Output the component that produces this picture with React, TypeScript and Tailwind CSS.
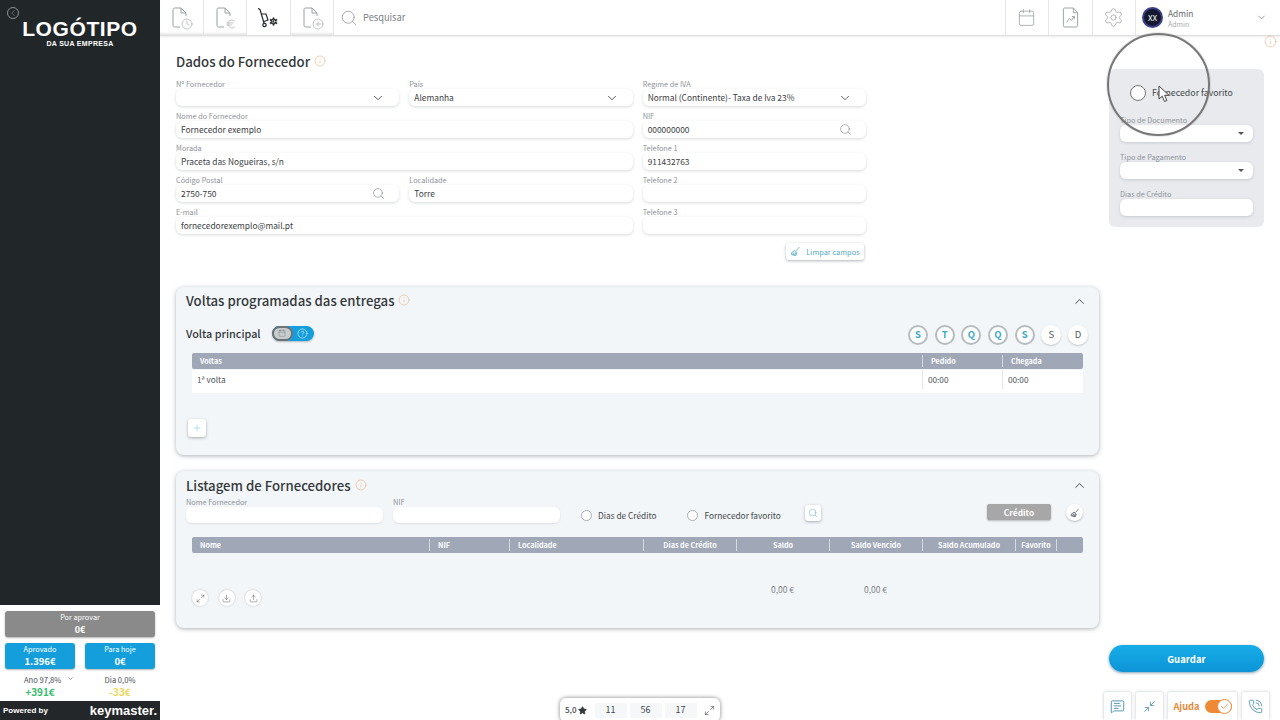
import React from 'react';
import { ChevronDown, ChevronUp, Search, Settings, Calendar, Info, Star, Maximize2, Minimize2, Download, Upload, Plus, HelpCircle, MessageSquareText, PhoneCall, Check, ChevronLeft, Clock, Euro, CirclePlus } from 'lucide-react';

const font = 'font-["Noto_Sans_CJK_SC","Noto_Sans",sans-serif]';

function Broom({ className }: { className?: string }) {
  return (
    <svg viewBox="0 0 16 16" className={className} fill="none" stroke="currentColor" strokeWidth="1.1">
      <path d="M13.5 1.5 9 7" />
      <path d="M6.5 6.5 10 9.5 8.5 14 2 12.5 1.5 10.5Z" fill="currentColor" fillOpacity="0.25" />
      <path d="M4 12.8 6 10M6.5 13.5 8 10.5" />
    </svg>
  );
}

function DocIcon({ badge: Badge }: { badge: React.ComponentType<{ className?: string; strokeWidth?: number }> }) {
  return (
    <div className="relative w-[20px] h-[22px] text-[#9aa0a3]">
      <svg viewBox="0 0 20 22" className="w-[20px] h-[22px]" fill="none" stroke="currentColor" strokeWidth="1">
        <path d="M9 20H3.5a1.5 1.5 0 0 1-1.500-1.500V2.500A1.500 1.500 0 0 1 3.500 1H10l5 5v3" />
        <path d="M10 1v5h5" />
      </svg>
      <div className="absolute right-[-2px] bottom-[-1px] bg-white rounded-full">
        <Badge className="w-[12px] h-[12px]" strokeWidth={1.2} />
      </div>
    </div>
  );
}

function Trolley() {
  return (
    <div className="relative w-[22px] h-[22px] text-[#24292c] -ml-[3px]">
      <svg viewBox="0 0 22 22" className="w-[22px] h-[22px]" fill="none" stroke="currentColor" strokeWidth="1.2">
        <path d="M2 1.500 4 2.500 8 16" />
        <path d="M5 7h5l2 6-5 2" />
        <circle cx="8.500" cy="18" r="1.700" />
      </svg>
      <Settings className="absolute right-[-1px] bottom-[2px] w-[11px] h-[11px] fill-[#24292c] text-white" strokeWidth={1.4} />
    </div>
  );
}

function Tab({ children, active }: { children: React.ReactNode; active?: boolean }) {
  return (
    <div className={`w-[43.500px] h-full flex items-center justify-center border-r border-[#e4e6e8] ${active ? 'bg-white relative z-10 h-[38px]' : 'shadow-[inset_0_-3px_3px_-2px_#d9dbdd]'}`}>
      {children}
    </div>
  );
}

function Field({ label, value, icon, className }: { label: string; value?: string; icon?: 'chevron' | 'search' | 'caret'; className?: string }) {
  return (
    <div className={className}>
      <div className="text-[7.300px] leading-[10px] text-[#8d9296] h-[10px] truncate">{label}</div>
      <div className="h-[17px] bg-white rounded-[6px] shadow-[0_1px_3px_rgba(120,130,140,0.3)] flex items-center justify-between pl-[5px] pr-[14px] text-[8.400px] text-[#3c4144]">
        <span>{value}</span>
        {icon === 'chevron' && <ChevronDown className="w-[14px] h-[14px] text-[#33383b]" strokeWidth={1.4} />}
        {icon === 'search' && <Search className="w-[13px] h-[13px] text-[#7d8387]" strokeWidth={1.1} />}
        {icon === 'caret' && <span className="w-0 h-0 border-x-[3px] border-x-transparent border-t-[3px] border-t-[#555] -mr-[5px]" />}
      </div>
    </div>
  );
}

function SectionTitle({ text, className }: { text: string; className?: string }) {
  return (
    <div className={`flex items-start gap-[4px] ${className ?? ''}`}>
      <span className="text-[13.200px] leading-[18px] font-medium text-[#33383b]">{text}</span>
      <Info className="w-[12px] h-[12px] text-[#e5b27c] mt-[2px]" strokeWidth={1.2} />
    </div>
  );
}

function Radio({ label, className }: { label: string; className?: string }) {
  return (
    <div className={`flex items-center gap-[6px] text-[8.300px] text-[#44494c] ${className ?? ''}`}>
      <span className="w-[11px] h-[11px] rounded-full bg-white border border-[#a9aeb2]" />
      {label}
    </div>
  );
}

const dias = [
  { d: 'S', on: true }, { d: 'T', on: true }, { d: 'Q', on: true }, { d: 'Q', on: true }, { d: 'S', on: true },
  { d: 'S', on: false }, { d: 'D', on: false },
];

const colunas = ['Nome', 'NIF', 'Localidade', 'Dias de Crédito', 'Saldo', 'Saldo Vencido', 'Saldo Acumulado', 'Favorito', ''];
const gridListagem = 'grid grid-cols-[237px_80px_134px_93px_93px_93px_93px_41px_27px]';

export default function App() {
  return (
    <div className={`relative w-[1280px] h-[720px] overflow-hidden flex bg-white ${font}`}>
      <aside className="w-[160px] h-full flex flex-col shrink-0">
        <div className="flex-1 bg-[#212629] relative pt-[18px] text-white">
          <ChevronLeft className="absolute left-[8px] top-[8px] w-[10px] h-[10px] rounded-full outline outline-1 outline-[#8b9194] text-[#8b9194]" strokeWidth={1.5} />
          <div className="text-center font-['Liberation_Sans',sans-serif] font-bold text-[21px] leading-[21px] tracking-[0.6px]">LOGÓTIPO</div>
          <div className="text-center font-['Liberation_Sans',sans-serif] font-bold text-[7px] leading-[7px] tracking-[0.3px] mt-[1px]">DA SUA EMPRESA</div>
        </div>
        <div className="h-[96px] bg-white px-[5px] pt-[6px] shrink-0 text-white text-center">
          <div className="h-[26px] bg-[#8a8a8a] rounded-[3px] shadow-[0_1px_2px_rgba(0,0,0,0.3)] text-[7.300px] leading-[12px]">
            Por aprovar
            <div className="text-[9px] font-bold leading-[13px]">0€</div>
          </div>
          <div className="flex justify-between mt-[6px]">
            <div className="w-[70px] h-[26px] bg-[#149fdc] rounded-[3px] shadow-[0_1px_2px_rgba(0,0,0,0.3)] text-[7.300px] leading-[12px]">
              Aprovado
              <div className="text-[9.500px] font-bold leading-[13px]">1.396€</div>
            </div>
            <div className="w-[70px] h-[26px] bg-[#149fdc] rounded-[3px] shadow-[0_1px_2px_rgba(0,0,0,0.3)] text-[7.300px] leading-[12px]">
              Para hoje
              <div className="text-[9.500px] font-bold leading-[13px]">0€</div>
            </div>
          </div>
          <div className="flex justify-between mt-[5px] text-[#4b5053] text-[7.600px] leading-[12px]">
            <div className="w-[70px] flex justify-start items-start gap-[6px] pl-[19px]">
              Ano 97,8% <ChevronDown className="w-[7px] h-[7px] mt-[1px]" />
            </div>
            <div className="w-[70px]">Dia 0,0%</div>
          </div>
          <div className="flex justify-between text-[10px] leading-[12px] font-bold">
            <div className="w-[70px] text-[#37bd6c]">+391€</div>
            <div className="w-[70px] text-[#ecd85a]">-33€</div>
          </div>
        </div>
        <div className="h-[19px] bg-[#23272a] flex items-center justify-between px-[3px] text-white shrink-0 font-['Liberation_Sans',sans-serif]">
          <span className="text-[8px] font-bold">Powered by</span>
          <span className="text-[13px] font-bold leading-none">keymaster.</span>
        </div>
      </aside>

      <div className="flex-1 flex flex-col min-w-0">
        <header className="h-[36px] flex items-stretch shrink-0 border-b border-[#dcdee0] shadow-[0_1px_2px_rgba(0,0,0,0.08)]">
          <Tab><DocIcon badge={Clock} /></Tab>
          <Tab><DocIcon badge={Euro} /></Tab>
          <Tab active><Trolley /></Tab>
          <Tab><DocIcon badge={CirclePlus} /></Tab>
          <div className="flex items-center gap-[5px] pl-[6px] flex-1">
            <Search className="w-[18px] h-[18px] text-[#8d9295]" strokeWidth={1} />
            <span className="text-[9.300px] text-[#7b8083]">Pesquisar</span>
          </div>
          <div className="w-[43.500px] flex items-center justify-center border-l border-[#e4e6e8]"><Calendar className="w-[19px] h-[19px] text-[#9aa0a3]" strokeWidth={1} /></div>
          <div className="w-[43.500px] flex items-center justify-center border-l border-[#e4e6e8]">
            <svg viewBox="0 0 20 22" className="w-[19px] h-[21px] text-[#9aa0a3]" fill="none" stroke="currentColor" strokeWidth="1">
              <path d="M13 1H4a1.500 1.500 0 0 0-1.500 1.500v17A1.500 1.500 0 0 0 4 21h12a1.500 1.500 0 0 0 1.500-1.500V6Z" />
              <path d="M13 1v5h4.500M6 16l3-4 2 2 3-4M11.500 10H14v2.500" />
            </svg>
          </div>
          <div className="w-[43.500px] flex items-center justify-center border-l border-[#e4e6e8]"><Settings className="w-[21px] h-[21px] text-[#9aa0a3]" strokeWidth={0.9} /></div>
          <div className="w-[145px] border-l border-[#e4e6e8] flex items-center pl-[6px]">
            <div className="w-[21px] h-[21px] rounded-full bg-[#15182c] border-2 border-[#3b3f8c] text-white text-[8px] flex items-center justify-center">XX</div>
            <div className="ml-[5px] flex-1 mt-[1px]">
              <div className="text-[8.400px] leading-[11px] text-[#666b6e]">Admin</div>
              <div className="text-[7px] leading-[10px] text-[#a5a9ac]">Admin</div>
            </div>
            <ChevronDown className="w-[11px] h-[11px] text-[#555a5d] mr-[13px]" strokeWidth={1.3} />
          </div>
        </header>

        <div className="flex-1 flex pl-[16px] min-h-0">
          <main className="w-[923px] shrink-0 flex flex-col">
            <SectionTitle text="Dados do Fornecedor" className="mt-[17px]" />
            <div className="w-[690px] grid grid-cols-3 gap-x-[10px] gap-y-[5px] mt-[8px]">
              <Field label="Nº Fornecedor" icon="chevron" />
              <Field label="País" value="Alemanha" icon="chevron" />
              <Field label="Regime de IVA" value="Normal (Continente)- Taxa de Iva 23%" icon="chevron" />
              <Field label="Nome do Fornecedor" value="Fornecedor exemplo" className="col-span-2" />
              <Field label="NIF" value="000000000" icon="search" />
              <Field label="Morada" value="Praceta das Nogueiras, s/n" className="col-span-2" />
              <Field label="Telefone 1" value="911432763" />
              <Field label="Código Postal" value="2750-750" icon="search" />
              <Field label="Localidade" value="Torre" />
              <Field label="Telefone 2" />
              <Field label="E-mail" value="fornecedorexemplo@mail.pt" className="col-span-2" />
              <Field label="Telefone 3" />
            </div>
            <div className="w-[688px] flex justify-end mt-[9px]">
              <div className="h-[17px] w-[78px] rounded-[3px] bg-white shadow-[0_1px_3px_rgba(100,110,120,0.5)] flex items-center justify-center gap-[5px] text-[7.400px] text-[#54a9bd]">
                <Broom className="w-[11px] h-[11px]" />
                Limpar campos
              </div>
            </div>

            <section className="mt-[27px] h-[168px] bg-[#f3f6f9] rounded-[8px] shadow-[0_1px_4px_rgba(90,100,110,0.5)] px-[10px] pt-[5px] relative">
              <div className="flex justify-between items-start">
                <SectionTitle text="Voltas programadas das entregas" />
                <ChevronUp className="w-[15px] h-[15px] text-[#33383b] mt-[2px] mr-[2px]" strokeWidth={1.4} />
              </div>
              <div className="flex items-center justify-between mt-[13px] h-[20px]">
                <div className="flex items-center gap-[11px]">
                  <span className="text-[10.800px] font-medium text-[#33383b]">Volta principal</span>
                  <div className="w-[42px] h-[15px] rounded-full bg-[#149fdc] flex items-center shadow-[0_1px_2px_rgba(0,0,0,0.25)]">
                    <div className="w-[21px] h-[15px] rounded-full border-2 border-[#6f7376] bg-[#c9cccf] flex items-center justify-center">
                      <Calendar className="w-[8px] h-[8px] text-[#6f7376]" strokeWidth={1.2} />
                    </div>
                    <HelpCircle className="w-[11px] h-[11px] text-white ml-[4px]" strokeWidth={1.2} />
                  </div>
                </div>
                <div className="flex gap-[6.670px] pr-[1px] mt-[3px]">
                  {dias.map((x, i) => (
                    <div key={i} className={`w-[20px] h-[20px] rounded-full bg-white flex items-center justify-center text-[9.500px] ${x.on ? 'border-2 border-[#b5bcc0] text-[#3eaac8] font-bold' : 'shadow-[0_1px_2px_rgba(0,0,0,0.2)] text-[#55595c]'}`}>{x.d}</div>
                  ))}
                </div>
              </div>
              <div className="ml-[6px] mr-[6px] mt-[10px]">
                <div className="grid grid-cols-[730px_80px_81px] h-[16px] bg-[#a0a8b8] rounded-[2px] text-white text-[7.200px] font-bold items-center">
                  <div className="pl-[8px]">Voltas</div>
                  <div className="pl-[8px] border-l border-[#d5d9e0] h-[12px] leading-[12px]">Pedido</div>
                  <div className="pl-[8px] border-l border-[#d5d9e0] h-[12px] leading-[12px]">Chegada</div>
                </div>
                <div className="grid grid-cols-[730px_80px_81px] h-[23px] bg-white mt-[1px] text-[8.200px] text-[#4b5053] items-start">
                  <div className="pl-[5px] h-[19px] leading-[19px]">1ª volta</div>
                  <div className="pl-[5px] border-l border-[#e4e6e8] h-[19px] leading-[19px]">00:00</div>
                  <div className="pl-[5px] border-l border-[#e4e6e8] h-[19px] leading-[19px]">00:00</div>
                </div>
              </div>
              <div className="ml-[2px] mt-[26px] w-[18px] h-[18px] rounded-[3px] bg-white shadow-[0_1px_3px_rgba(90,100,110,0.5)] flex items-center justify-center">
                <Plus className="w-[10px] h-[10px] text-[#7cc0d2]" strokeWidth={1.2} />
              </div>
            </section>

            <section className="mt-[16px] h-[157px] bg-[#f3f6f9] rounded-[8px] shadow-[0_1px_4px_rgba(90,100,110,0.5)] px-[10px] pt-[6px]">
              <div className="flex justify-between items-start h-[18px]">
                <SectionTitle text="Listagem de Fornecedores" />
                <ChevronUp className="w-[15px] h-[15px] text-[#33383b] mt-[1px] mr-[2px]" strokeWidth={1.4} />
              </div>
              <div className="flex items-end h-[21px] mt-[7px]">
                <div className="w-[197px]">
                  <div className="text-[7.300px] leading-[9px] text-[#8d9296]">Nome Fornecedor</div>
                  <div className="h-[16px] bg-white rounded-[6px] shadow-[0_1px_2px_rgba(120,130,140,0.2)]" />
                </div>
                <div className="w-[167px] ml-[10px]">
                  <div className="text-[7.300px] leading-[9px] text-[#8d9296]">NIF</div>
                  <div className="h-[16px] bg-white rounded-[6px] shadow-[0_1px_2px_rgba(120,130,140,0.2)]" />
                </div>
                <Radio label="Dias de Crédito" className="ml-[21px] h-[16px]" />
                <Radio label="Fornecedor favorito" className="ml-[31px] h-[16px]" />
                <div className="ml-[24px] mb-[2px] w-[16px] h-[16px] rounded-[3px] bg-white shadow-[0_1px_3px_rgba(90,100,110,0.5)] flex items-center justify-center">
                  <Search className="w-[10px] h-[10px] text-[#55aebf]" strokeWidth={1.2} />
                </div>
                <div className="ml-auto mb-[3px] w-[64px] h-[16px] rounded-[2px] bg-[#a7a7a7] shadow-[0_1px_2px_rgba(0,0,0,0.25)] text-white text-[8.400px] font-bold flex items-center justify-center">Crédito</div>
                <div className="ml-[15px] mr-[6px] mb-[2px] w-[17px] h-[17px] rounded-full bg-white shadow-[0_1px_2px_rgba(0,0,0,0.25)] flex items-center justify-center text-[#44494c]">
                  <Broom className="w-[10px] h-[10px]" />
                </div>
              </div>
              <div className="mx-[6px] mt-[14px]">
                <div className={`${gridListagem} h-[16px] bg-[#a0a8b8] rounded-[2px] text-white text-[7.200px] font-bold items-center`}>
                  {colunas.map((c, i) => (
                    <div key={i} className={`h-[12px] leading-[12px] ${i > 0 ? 'border-l border-[#d5d9e0]' : ''} ${i < 3 ? 'pl-[8px]' : 'text-center'}`}>{c}</div>
                  ))}
                </div>
                <div className={gridListagem}>
                  <div className="pt-[37px] flex gap-[10.500px]">
                    {[Maximize2, Download, Upload].map((Icon, i) => (
                      <div key={i} className="w-[16px] h-[16px] rounded-full bg-white shadow-[0_0_2px_rgba(0,0,0,0.25)] flex items-center justify-center">
                        <Icon className="w-[9px] h-[9px] text-[#555a5d]" strokeWidth={1.3} />
                      </div>
                    ))}
                  </div>
                  <div className="col-span-3" />
                  <div className="pt-[30px] text-center text-[8.500px] leading-[12px] text-[#7d8286]">0,00 €</div>
                  <div className="pt-[30px] text-center text-[8.500px] leading-[12px] text-[#7d8286]">0,00 €</div>
                </div>
              </div>
            </section>
          </main>

          <div className="ml-[5px] w-[165px] flex flex-col">
            <div className="mx-[5px] mt-[33px] h-[158px] bg-[#e8eaee] rounded-[6px] px-[11px] pt-[15px]">
              <Radio label="Fornecedor favorito" className="ml-[10px] [&>span]:w-[16px] [&>span]:h-[16px] [&>span]:border-[#777] text-[8.800px] gap-[6px] h-[18px]" />
              <Field label="Tipo de Documento" icon="caret" className="mt-[13px]" />
              <Field label="Tipo de Pagamento" icon="caret" className="mt-[10px]" />
              <Field label="Dias de Crédito" className="mt-[10px]" />
            </div>
            <div className="mx-[5px] mt-auto h-[27px] rounded-full bg-gradient-to-b from-[#17ade8] to-[#0d94d6] shadow-[0_1px_3px_rgba(0,60,100,0.5)] text-white text-[9.500px] font-bold flex items-center justify-center pt-[1px]">Guardar</div>
            <div className="mt-[20px] h-[28px] flex justify-between">
              <div className="w-[27px] bg-white shadow-[0_0_3px_rgba(100,110,120,0.45)] rounded-t-[2px] flex items-center justify-center">
                <MessageSquareText className="w-[15px] h-[15px] text-[#2f7fa3]" strokeWidth={1.3} />
              </div>
              <div className="w-[27px] bg-white shadow-[0_0_3px_rgba(100,110,120,0.45)] rounded-t-[2px] flex items-center justify-center">
                <Minimize2 className="w-[13px] h-[13px] text-[#2f7fa3]" strokeWidth={1.3} />
              </div>
              <div className="w-[69px] bg-white shadow-[0_0_3px_rgba(100,110,120,0.45)] rounded-t-[2px] flex items-center justify-center gap-[5px] text-[#e8893a] text-[9.300px] font-bold">
                <span className="pt-[2px]">Ajuda</span>
                <div className="w-[27px] h-[13px] rounded-full bg-[#ee8a35] relative">
                  <div className="absolute right-0 top-[-1px] w-[15px] h-[15px] rounded-full bg-white border border-[#ee8a35] flex items-center justify-center">
                    <Check className="w-[9px] h-[9px] text-[#ee8a35]" strokeWidth={2} />
                  </div>
                </div>
              </div>
              <div className="w-[27px] bg-white shadow-[0_0_3px_rgba(100,110,120,0.45)] rounded-t-[2px] flex items-center justify-center">
                <PhoneCall className="w-[15px] h-[15px] text-[#2f7fa3]" strokeWidth={1.2} />
              </div>
            </div>
          </div>
        </div>
      </div>

      <Info className="absolute left-[1264px] top-[35px] w-[13px] h-[13px] text-[#e9b383]" strokeWidth={1.2} />

      {/* cursor highlight from the screen recording */}
      <div className="absolute left-[1107px] top-[33px] w-[103px] h-[103px] rounded-full border-2 border-[#777] shadow-[0_0_2px_rgba(0,0,0,0.3)]" />
      <svg viewBox="0 0 12 18" className="absolute left-[1158px] top-[85px] w-[12px] h-[18px]">
        <path d="M1 1v13l3.200-2.800L6.500 16.500l2.400-1-2.300-5.200H11Z" fill="#fff" stroke="#444" strokeWidth="1" strokeLinejoin="round" />
      </svg>

      <div className="absolute left-[560px] top-[698px] w-[160px] h-[24px] bg-white rounded-[6px] shadow-[0_0_4px_rgba(0,0,0,0.5)] flex items-center pl-[5px] pr-[4px] text-[9px] text-[#44494c]">
        <span className="text-[8px] font-medium">5,0</span>
        <Star className="w-[9px] h-[9px] fill-[#33383b] text-[#33383b] ml-[1px]" />
        <div className="ml-[8px] flex gap-[3px]">
          {['11', '56', '17'].map(n => (
            <div key={n} className="w-[32px] h-[15px] bg-[#f5f7f9] flex items-center justify-center">{n}</div>
          ))}
        </div>
        <Maximize2 className="w-[11px] h-[11px] ml-auto mr-[1px] text-[#44494c]" strokeWidth={1.3} />
      </div>
    </div>
  );
}
